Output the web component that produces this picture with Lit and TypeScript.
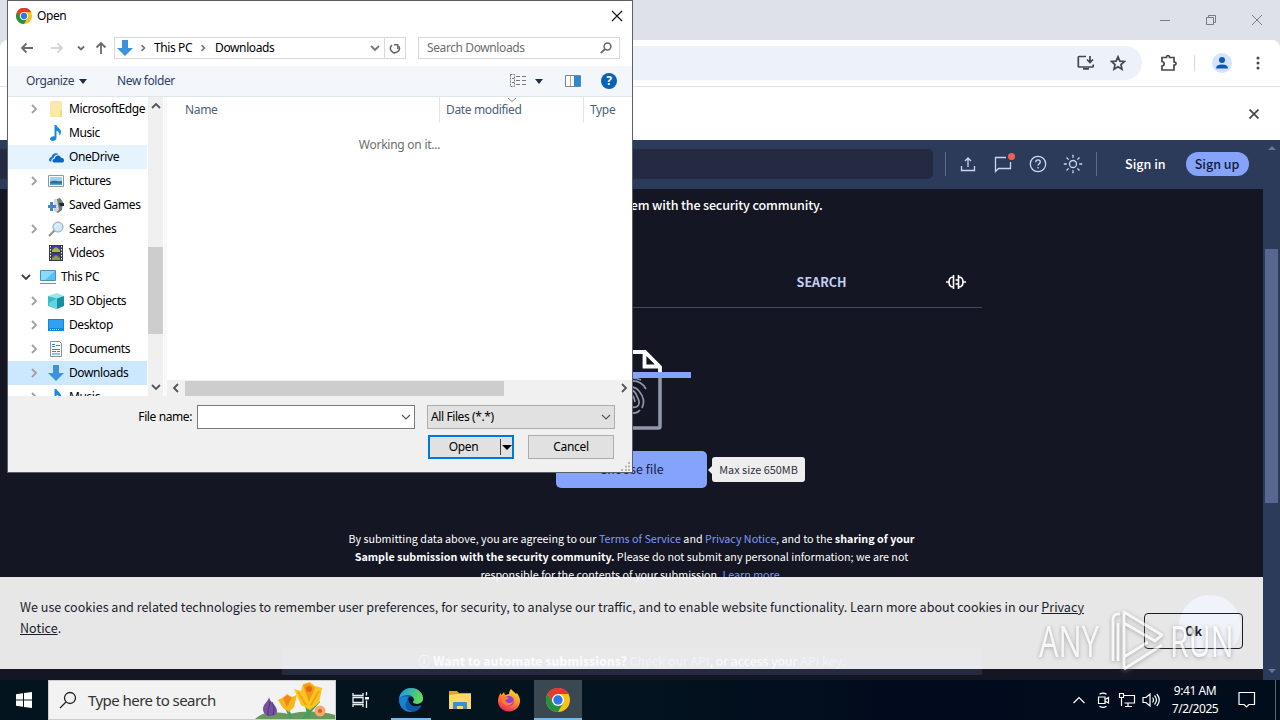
import { LitElement, html, css, svg } from "lit";
import { customElement, property } from "lit/decorators.js";
import { classMap } from "lit/directives/class-map.js";

const chrome = svg`
  <circle cx="12" cy="12" r="12" fill="#fbc116"></circle>
  <path d="M12 12 1.600 6A12 12 0 0 1 22.400 6H12z" fill="#e33b2e"></path>
  <path d="M12 6h10.400A12 12 0 0 0 1.600 6l5.200 9z" fill="#e33b2e"></path>
  <path d="M1.600 6A12 12 0 0 0 12 24l5.200-9H6.800z" fill="#229342"></path>
  <circle cx="12" cy="12" r="6" fill="#fff"></circle>
  <circle cx="12" cy="12" r="4.700" fill="#2b78e8"></circle>`;

const note = svg`<path d="M6.500 0h2c.2 2.500 4.700 3.500 4.500 7-.1 1.600-.8 2.900-1.700 3.800.6-3-.4-4.300-2.800-5.100v7c0 2-1.700 3.300-3.700 3.300-1.700 0-2.800-.9-2.800-2.200 0-1.700 2.100-3 4.500-2.600z" fill="#1a8ad8"></path>`;

const downArrow = svg`<path d="M5 0h6v8h5l-8 8-8-8h5z" fill="#3c93dc"></path>`;

// 16x16 glyphs of the folder tree
const treeIcons: Record<string, unknown> = {
  folder: svg`<path d="M2 0h12v16H2z" fill="#fbe9a9"></path><path d="M12 9h2v7h-2z" fill="#f3d98a"></path>`,
  music: note,
  onedrive: svg`
    <path d="M1 11.500C1 9 2.500 8.300 3.500 8 4 4.500 8 3 10.500 5.200 7.500 5.500 6 7 5.700 9 4 9.300 3 11 3.500 12.500 2 12.500 1 12 1 11.500z" fill="#1377c9"></path>
    <path d="M4.500 12c0-1.500 1-2.300 2.200-2.300C6.800 6.500 11.500 5 13 8.700c2 0 3 1 3 2.700 0 1.400-1 2.100-2 2.100H6.500c-1.200 0-2-.6-2-1.500z" fill="#0c66bb"></path>`,
  pictures: svg`
    <path d="M.5 2.500h15v11H.5z" fill="#fff" stroke="#8d9aa6"></path>
    <path d="M2 4h12v8H2z" fill="#9fd0f2"></path>
    <path d="M2 9c4-3 7 0 12-1v4H2z" fill="#2f6b8e"></path><path d="M2 10.500h12V12H2z" fill="#4fa7d8"></path>`,
  games: svg`
    <path d="M6 3 12 1l3 4-1 8-4 3-4-3z" fill="#707983"></path>
    <path d="M6 3l3-1 2 11-3 2-2-3z" fill="#d2d7db"></path>
    <path d="M11 6h5v3h-4z" fill="#24292e"></path>
    <path d="M2 5h3v3h3v3H5v3H2v-3H0V8h2z" fill="#4485c5"></path>`,
  search: svg`
    <path d="M1 15 7 9" stroke="#8b9197" stroke-width="2"></path>
    <circle cx="10" cy="6" r="5" fill="#cfe8fa" stroke="#8ba8c0"></circle>
    <path d="M7 6c1-3 4-3 5-2" stroke="#fff" fill="none"></path>`,
  videos: svg`
    <path d="M1 0h14v16H1z" fill="#3a3d45"></path>
    <path d="M4 1h8v6H4z" fill="#3b3cae"></path><path d="M4 5l4-3 4 3v2H4z" fill="#a8b73b"></path>
    <path d="M4 9h8v6H4z" fill="#37409c"></path><path d="M4 13l4-3 4 3v2H4z" fill="#8f9a34"></path>
    <path d="M2.500 1v15M13.500 1v15" stroke="#f0f0f0" stroke-dasharray="1.500 1.500"></path>`,
  pc: svg`
    <path d="M.5 1.500h15v10H.5z" fill="#55c0f2" stroke="#4a91b8"></path>
    <path d="M1 2h14L5 11H1z" fill="#8ad8fa"></path><path d="M0 14.500h16" stroke="#8a8f94"></path>`,
  objects: svg`
    <path d="M0 3 9 0l7 3-7 3z" fill="#9be6ee"></path><path d="M0 3l9 2.500V16L0 13z" fill="#36bccb"></path>
    <path d="M9 5.500 16 3v10l-7 3z" fill="#14909e"></path><path d="M1 10l8-5v11l-8-3z" fill="#63d4df"></path>`,
  desktop: svg`
    <path d="M0 2h16v12H0z" fill="#1287d8"></path><path d="M1 3h14v8H1z" fill="#2fa2f2"></path>
    <path d="M2 12.500h9" stroke="#bfe2fa" stroke-dasharray="1 1"></path>`,
  documents: svg`
    <path d="M2.500.5h9l2 2v13h-11z" fill="#fff" stroke="#8c949b"></path>
    <path d="M4 3.500h3M4 5.500h3M8 4.500h4M4 8.500h8M4 10.500h4M9 10.500h3M4 13h8" stroke="#2c8ccd"></path>`,
  downloads: downArrow,
};

interface TreeItem {
  label: string;
  icon: string;
  expand?: "closed" | "open";
  root?: boolean;
  state?: "hover" | "selected";
}

const tree: TreeItem[] = [
  { label: "MicrosoftEdge", icon: "folder", expand: "closed" },
  { label: "Music", icon: "music" },
  { label: "OneDrive", icon: "onedrive", state: "hover" },
  { label: "Pictures", icon: "pictures", expand: "closed" },
  { label: "Saved Games", icon: "games" },
  { label: "Searches", icon: "search", expand: "closed" },
  { label: "Videos", icon: "videos" },
  { label: "This PC", icon: "pc", expand: "open", root: true },
  { label: "3D Objects", icon: "objects", expand: "closed" },
  { label: "Desktop", icon: "desktop", expand: "closed" },
  { label: "Documents", icon: "documents", expand: "closed" },
  { label: "Downloads", icon: "downloads", expand: "closed", state: "selected" },
  { label: "Music", icon: "music", expand: "closed" },
];

@customElement("x-chevron")
export class ChevronElement extends LitElement {
  @property() dir = "down";

  render() {
    const paths: Record<string, string> = {
      down: "M1 3l4 4 4-4",
      up: "M1 7l4-4 4 4",
      left: "M7 1 3 5l4 4",
      right: "M3 1l4 4-4 4",
    };
    return html`<svg viewBox="0 0 10 10" width="10" height="10"><path d=${paths[this.dir]}></path></svg>`;
  }

  static styles = css`
    :host {
      display: inline-flex;
      flex: none;
      color: #555;
    }

    path {
      fill: none;
      stroke: currentColor;
      stroke-width: var(--stroke, 1.800);
    }
  `;
}

@customElement("file-dialog")
export class FileDialog extends LitElement {
  render() {
    return html`
      <div class="title">
        <svg viewBox="0 0 24 24" width="16" height="16">${chrome}</svg>
        <span class="grow">Open</span>
        <svg viewBox="0 0 12 12" width="12" height="12"><path d="M1 1l10 10M11 1 1 11" stroke="#111" stroke-width="1.100"></path></svg>
      </div>
      <div class="address">
        <svg class="nav" viewBox="0 0 14 12" width="14" height="12"><path d="M13 6H2M6.500 1.500 2 6l4.500 4.500"></path></svg>
        <svg class="nav off" viewBox="0 0 14 12" width="14" height="12"><path d="M1 6h11M7.500 1.500 12 6l-4.500 4.500"></path></svg>
        <svg class="nav drop" viewBox="0 0 8 8" width="8" height="8"><path d="M1 2.500l3 3 3-3"></path></svg>
        <svg class="nav" viewBox="0 0 12 14" width="12" height="14"><path d="M6 13V2M1.500 6.500 6 2l4.500 4.500"></path></svg>
        <div class="path">
          <svg viewBox="0 0 16 16" width="16" height="16">${downArrow}</svg>
          <x-chevron class="sep" dir="right"></x-chevron>
          <span>This PC</span>
          <x-chevron class="sep second" dir="right"></x-chevron>
          <span class="grow">Downloads</span>
          <x-chevron class="history"></x-chevron>
          <div class="refresh">
            <svg viewBox="0 0 12 12" width="12" height="12">
              <path d="M3 3A4.400 4.400 0 1 0 9.800 4.200" fill="none" stroke="#666" stroke-width="1.500"></path>
              <path d="M6.200 5.500V1.700H10.500" transform="rotate(90 7 3.500)" fill="none" stroke="#666" stroke-width="1.500"></path>
            </svg>
          </div>
        </div>
        <div class="search">
          <span class="grow">Search Downloads</span>
          <svg viewBox="0 0 12 12" width="12" height="12">
            <circle cx="7.500" cy="4.500" r="3.400" fill="none" stroke="#666" stroke-width="1.500"></circle>
            <path d="M5 7 .8 11.200" stroke="#666" stroke-width="1.800"></path>
          </svg>
        </div>
      </div>
      <div class="toolbar">
        <span>Organize</span>
        <i class="caret"></i>
        <span class="folder">New folder</span>
        <span class="grow"></span>
        <svg viewBox="0 0 16 14" width="16" height="14">
          <path d="M.5.5h4v12h-4z" fill="none" stroke="#777" stroke-dasharray="2 1"></path>
          <path d="M6 2.500h4M12 2.500h4M6 6.500h4M12 6.500h4M6 10.500h4M12 10.500h4M2 4.500h2M2 8.500h2" stroke="#777"></path>
        </svg>
        <i class="caret views"></i>
        <svg class="pane" viewBox="0 0 16 12" width="16" height="12">
          <path d="M.5.500h15v11H.5z" fill="#fff" stroke="#6c8aa3"></path>
          <path d="M5.500 1v10" stroke="#c2a184"></path>
          <path d="M9 1h6.500v10.500H9z" fill="#2f88cf"></path>
        </svg>
        <span class="help">?</span>
      </div>
      <div class="body">
        <div class="tree">${tree.map((item) => this.treeRow(item))}</div>
        <div class="vscroll">
          <x-chevron dir="up"></x-chevron>
          <div class="vthumb"></div>
          <x-chevron></x-chevron>
        </div>
        <div class="files">
          <div class="columns">
            <span class="name">Name</span>
            <span class="date">Date modified
              <svg class="sort" viewBox="0 0 8 4" width="8" height="4"><path d="M0 0l4 3.500L8 0" fill="none" stroke="#888"></path></svg>
            </span>
            <span class="type">Type</span>
          </div>
          <div class="working">Working on it...</div>
          <div class="hscroll">
            <x-chevron dir="left"></x-chevron>
            <div class="hthumb"></div>
            <x-chevron dir="right"></x-chevron>
          </div>
        </div>
      </div>
      <div class="footer">
        <div class="row">
          <span class="label">File name:</span>
          <div class="field"><x-chevron></x-chevron></div>
          <div class="filter"><span class="grow">All Files (*.*)</span><x-chevron></x-chevron></div>
        </div>
        <div class="row buttons">
          <div class="btn primary"><span>Open</span><i class="caret"></i></div>
          <div class="btn">Cancel</div>
        </div>
        <svg class="grip" viewBox="0 0 9 9" width="9" height="9">
          <path d="M7 0h2v2H7zM4 3.500h2v2H4zM7 3.500h2v2H7zM0 7h2v2H0zM4 7h2v2H4zM7 7h2v2H7z" fill="#b9b5aa"></path>
        </svg>
      </div>
    `;
  }

  private treeRow(item: TreeItem) {
    const classes = {
      item: true,
      root: !!item.root,
      hover: item.state === "hover",
      selected: item.state === "selected",
    };
    return html`
      <div class=${classMap(classes)}>
        <span class="toggle">
          ${item.expand ? html`<x-chevron class=${item.expand} dir=${item.expand === "open" ? "down" : "right"}></x-chevron>` : ""}
        </span>
        <svg viewBox="0 0 16 16" width="16" height="16">${treeIcons[item.icon]}</svg>
        <span>${item.label}</span>
      </div>
    `;
  }

  static styles = css`
    :host {
      display: flex;
      flex-direction: column;
      box-sizing: border-box;
      border: 1px solid #5d5f66;
      background: #fff;
      color: #000;
      font: 12px/16px "Noto Sans", "Open Sans", sans-serif;
      letter-spacing: -0.400px;
      white-space: nowrap;
    }

    .grow {
      flex: 1;
    }

    .title {
      display: flex;
      align-items: center;
      height: 29px;
      padding: 0 9px 0 8px;
      gap: 5px;
    }

    .address {
      display: flex;
      align-items: center;
      height: 36px;
      padding-left: 12px;
    }

    .nav {
      margin-right: 16px;
    }

    .nav path {
      fill: none;
      stroke: #6b6b6b;
      stroke-width: 1.800;
    }

    .nav.off path {
      stroke: #d5d5d5;
    }

    .nav.drop {
      margin: 0 10px 0 -3px;
    }

    .nav.drop + .nav {
      margin-right: 7px;
    }

    .path,
    .search {
      display: flex;
      align-items: center;
      box-sizing: border-box;
      height: 22px;
      border: 1px solid #d9d9d9;
    }

    .path {
      width: 292px;
      padding-left: 2px;
    }

    .sep {
      margin: 0 6px 0 5px;
      transform: scale(0.7);
      color: #777;
      --stroke: 2.400;
    }

    .sep.second {
      margin: 0 7px 0 6px;
    }

    .history {
      color: #777;
    }

    .refresh {
      display: flex;
      align-items: center;
      justify-content: center;
      width: 20px;
      height: 20px;
      margin-left: 4px;
      border-left: 1px solid #d9d9d9;
    }

    .search {
      width: 202px;
      margin-left: 12px;
      padding: 0 7px 0 8px;
      color: #6d6d6d;
    }

    .toolbar {
      display: flex;
      align-items: center;
      box-sizing: border-box;
      height: 31px;
      padding: 0 15px 0 18px;
      border-bottom: 1px solid #e1e6ea;
      background: #f3f6fa;
      color: #2c3f66;
    }

    .caret {
      margin-left: 5px;
      border: 4px solid transparent;
      border-top: 5px solid #1e2f46;
      border-bottom: 0;
    }

    .folder {
      margin-left: 30px;
    }

    .views {
      margin: 0 22px 0 9px;
    }

    .help {
      width: 16px;
      height: 16px;
      margin-left: 20px;
      border-radius: 50%;
      background: #0663b8;
      color: #fff;
      font-weight: 700;
      text-align: center;
    }

    .body {
      display: flex;
      height: 299px;
    }

    .tree {
      width: 139px;
      overflow: hidden;
    }

    .item {
      display: flex;
      align-items: center;
      height: 24px;
    }

    .item svg {
      flex: none;
      margin-right: 5px;
    }

    .toggle {
      display: flex;
      justify-content: center;
      flex: none;
      width: 12px;
      padding: 0 8px 0 20px;
    }

    .root .toggle {
      padding: 0 8px 0 12px;
    }

    .closed {
      color: #a0a0a0;
    }

    .open {
      color: #404040;
    }

    .hover {
      background: #e5f3ff;
    }

    .selected {
      background: #cce8ff;
    }

    .vscroll {
      display: flex;
      flex-direction: column;
      align-items: center;
      box-sizing: border-box;
      width: 15px;
      margin-left: 1px;
      padding: 4px 0;
      background: #f0f0f0;
    }

    .vthumb {
      width: 15px;
      height: 88px;
      margin: 136px 0 48px;
      background: #cdcdcd;
    }

    .files {
      display: flex;
      flex: 1;
      flex-direction: column;
      margin-left: 1px;
      border-left: 3px solid #f8f8f8;
    }

    .columns {
      display: flex;
      height: 26px;
      line-height: 26px;
      color: #4c607a;
      letter-spacing: -0.350px;
    }

    .name {
      width: 254px;
      padding-left: 18px;
    }

    .date {
      position: relative;
      width: 137px;
      padding-left: 6px;
      border-left: 1px solid #e5e5e5;
    }

    .sort {
      position: absolute;
      top: 1px;
      left: 68px;
    }

    .type {
      padding-left: 6px;
      border-left: 1px solid #e5e5e5;
    }

    .working {
      flex: 1;
      padding-top: 14px;
      color: #6d6d6d;
      letter-spacing: -0.250px;
      text-align: center;
    }

    .hscroll {
      display: flex;
      align-items: center;
      height: 16px;
      padding: 0 3px 0 4px;
      background: #f0f0f0;
    }

    .hthumb {
      width: 319px;
      height: 15px;
      margin: 0 auto 0 4px;
      background: #cdcdcd;
    }

    .footer {
      position: relative;
      flex: 1;
      padding: 9px 17px 0 0;
      background: #f0f0f0;
    }

    .row {
      display: flex;
      align-items: center;
      justify-content: flex-end;
    }

    .label {
      margin-right: 5px;
    }

    .field,
    .filter {
      display: flex;
      align-items: center;
      justify-content: flex-end;
      box-sizing: border-box;
      height: 24px;
      padding: 0 3px;
      --stroke: 1.100;
    }

    .field {
      width: 218px;
      border: 1px solid #7a7a7a;
      background: #fff;
    }

    .filter {
      width: 188px;
      margin-left: 12px;
      border: 1px solid #adadad;
      background: #e1e1e1;
    }

    .buttons {
      gap: 14px;
      margin: 6px 1px 0 0;
      letter-spacing: -0.300px;
    }

    .btn {
      display: flex;
      align-items: center;
      justify-content: center;
      box-sizing: border-box;
      width: 86px;
      height: 24px;
      border: 1px solid #adadad;
      background: #e1e1e1;
    }

    .primary {
      justify-content: flex-end;
      border: 2px solid #0078d7;
    }

    .primary span {
      box-sizing: border-box;
      width: 71px;
      margin-right: 1px;
      padding-right: 3px;
      border-right: 1px solid #444;
      text-align: center;
    }

    .primary .caret {
      margin: 0;
      border-width: 5px 5px 0;
      border-top-color: #000;
    }

    .grip {
      position: absolute;
      right: 2px;
      bottom: 1px;
    }
  `;
}

@customElement("web-page")
export class WebPage extends LitElement {
  render() {
    return html`
      <header>
        <div class="query"></div>
        <i class="rule"></i>
        <svg viewBox="0 0 16 16" width="16" height="16"><path d="M8 11V2M5 5l3-3 3 3M1.500 10v4.500h13V10"></path></svg>
        <span class="chat">
          <svg viewBox="0 0 18 18" width="18" height="18"><path d="M12 2.500H1.500v14l3-3h12V7"></path></svg>
          <i class="dot"></i>
        </span>
        <svg viewBox="0 0 18 18" width="18" height="18">
          <circle cx="9" cy="9" r="7.700"></circle>
          <path d="M6.700 7.200c0-3.200 4.600-3 4.600-.2 0 1.700-2.300 1.700-2.300 3.500M9 12v1.400"></path>
        </svg>
        <svg viewBox="0 0 20 20" width="20" height="20">
          <circle cx="10" cy="10" r="3.500"></circle>
          <path d="M10 .8v3M10 16.200v3M.8 10h3M16.200 10h3M3.500 3.500l2.100 2.100M14.400 14.400l2.100 2.100M3.500 16.500l2.100-2.100M14.400 5.600l2.100-2.100"></path>
        </svg>
        <i class="rule second"></i>
        <span class="signin">Sign in</span>
        <span class="signup">Sign up</span>
      </header>
      <main>
        <p class="intro">Analyse suspicious files, domains, IPs and URLs to detect malware and other<br>breaches, automatically share them with the security community.</p>
        <div class="tabs">
          <span class="tab">FILE</span>
          <span class="tab">URL</span>
          <span class="tab">SEARCH</span>
          <span class="code">
            <svg viewBox="0 0 20 16" width="20" height="16">
              <path d="M7.500 1v14M12.500 1v14M7.500 3C4 3 3 5 3 8s1 5 4.500 5M12.500 3C16 3 17 5 17 8s-1 5-4.500 5M0 8h3M17 8h3M9.500 6h3M9.500 10h3"></path>
            </svg>
          </span>
        </div>
        <div class="drop">
          <svg viewBox="0 0 118 80" width="118" height="80">
            <path d="M31 26v50.500q0 1.500 1.500 1.500h53q1.500 0 1.500-1.500V26" fill="none" stroke="#9196ab" stroke-width="3.600"></path>
            <path d="M31 26V2h41l15 15v8M71.500 2v14.500H87" fill="none" stroke="#fff" stroke-width="3.800"></path>
            <g fill="none" stroke="#9196ab" stroke-width="1.700">
              <path d="M50 30q9-4 18 0M45 40c7-12 22-12 28-1M46 50c-2-14 14-17 20-9 5 6 6 11 3 17M56 62c4 2 9 1 11-2M50 55c0-4-2-12 5-15 7-2 9 6 11 11 1 6-6 9-9 3-1-3-1-6-3-5-2 1 0 6 0 9M57 46c2-2 4 0 5 6"></path>
            </g>
            <path d="M0 22h118v6H0z" fill="#85a3fb"></path>
          </svg>
          <div class="choose">Choose file<span class="tip">Max size 650MB</span></div>
        </div>
        <p class="terms">
          By submitting data above, you are agreeing to our <a>Terms of Service</a> and <a>Privacy Notice</a>, and to the <b>sharing of your<br>Sample submission with the security community.</b> Please do not submit any personal information; we are not<br>responsible for the contents of your submission. <a>Learn more.</a>
        </p>
        <div class="api"><span>ⓘ <b>Want to automate submissions?</b> <a>Check our API</a>, or access your <a>API key.</a></span></div>
      </main>
      <div class="bubble"></div>
      <div class="cookies">
        <span>We use cookies and related technologies to remember user preferences, for security, to analyse our traffic, and to enable website functionality. Learn more about cookies in our <u>Privacy<br>Notice</u>.</span>
        <div class="ok">Ok</div>
      </div>
    `;
  }

  static styles = css`
    :host {
      display: block;
      position: relative;
      z-index: 0;
      overflow: hidden;
      background: #151623;
      color: #fff;
      font-family: "Noto Sans CJK SC", sans-serif;
      font-size: 12.550px;
      white-space: nowrap;
    }

    header {
      display: flex;
      position: relative;
      z-index: 1;
      align-items: center;
      box-sizing: border-box;
      height: 49px;
      padding-bottom: 1px;
      background: #2d3b5b;
    }

    header svg {
      fill: none;
      stroke: #cbd5f0;
      stroke-width: 1.300;
    }

    .query {
      width: 933px;
      height: 30px;
      margin-right: 12px;
      border-radius: 0 5px 5px 0;
      background: #242a42;
    }

    .rule {
      width: 1px;
      height: 24px;
      margin-right: 14px;
      background: #5d6b8c;
    }

    .chat {
      position: relative;
      height: 18px;
      margin: 0 17px 0 18px;
    }

    .chat + svg {
      margin-right: 16px;
    }

    .dot {
      position: absolute;
      top: -2px;
      right: -3px;
      width: 7px;
      height: 7px;
      border-radius: 50%;
      background: #f0604f;
    }

    .second {
      margin: 0 28px 0 13px;
    }

    .signin,
    .signup {
      height: 24px;
      font-weight: 500;
      line-height: 23px;
    }

    .signup {
      width: 63px;
      margin-left: 20px;
      border-radius: 12px;
      background: #85a3fb;
      color: #141a35;
      text-align: center;
    }

    main {
      display: flex;
      flex-direction: column;
      align-items: center;
      margin-top: -16px;
    }

    p {
      margin: 0;
      text-align: center;
    }

    .intro {
      font-weight: 500;
      letter-spacing: -0.150px;
      line-height: 21px;
    }

    .tabs {
      display: flex;
      align-items: center;
      box-sizing: border-box;
      width: 700px;
      height: 52px;
      margin-top: 41px;
      border-bottom: 1px solid #47495a;
      color: #c3cff5;
      font-weight: 700;
    }

    .tab {
      width: 216px;
      text-align: center;
    }

    .code {
      display: flex;
      flex: 1;
      justify-content: center;
    }

    .code path {
      fill: none;
      stroke: #fff;
      stroke-width: 1.600;
    }

    .drop {
      display: flex;
      flex-direction: column;
      align-items: center;
      margin-top: 42px;
    }

    .choose {
      position: relative;
      width: 151px;
      height: 37px;
      margin-top: 21px;
      border-radius: 5px;
      background: #85a3fb;
      color: #182046;
      line-height: 36px;
      text-align: center;
    }

    .tip {
      position: absolute;
      top: 6px;
      left: 156px;
      width: 93px;
      height: 25px;
      border-radius: 3px;
      background: #eeeeef;
      color: #30313b;
      font-size: 10.900px;
      line-height: 25px;
    }

    .tip::before {
      content: "";
      position: absolute;
      top: 9px;
      left: -4px;
      border: 4px solid transparent;
      border-right-color: #eeeeef;
      border-left: 0;
    }

    .terms {
      margin-top: 42px;
      font-size: 10.740px;
      line-height: 18px;
    }

    a {
      color: #7d9bf5;
    }

    .api {
      width: 700px;
      height: 27px;
      margin-top: 64px;
      background: #262a41;
      font-size: 12.400px;
      line-height: 26px;
      text-align: center;
    }

    .bubble {
      position: absolute;
      top: 455px;
      left: 1179px;
      width: 62px;
      height: 62px;
      border-radius: 50%;
      background: #85a3fb;
    }

    .cookies {
      display: flex;
      position: absolute;
      bottom: 11px;
      left: 0;
      box-sizing: border-box;
      width: 100%;
      height: 92px;
      padding: 19px 20px;
      justify-content: space-between;
      background: #fafafaeb;
      color: #1b1d2b;
      line-height: 21px;
    }

    .ok {
      box-sizing: border-box;
      width: 99px;
      height: 36px;
      margin-top: 17px;
      border: 1px solid #1b1d2b;
      border-radius: 4px;
      font-weight: 700;
      line-height: 34px;
      text-align: center;
    }
  `;
}

@customElement("task-bar")
export class TaskBar extends LitElement {
  render() {
    return html`
      <div class="start">
        <svg viewBox="0 0 16 16" width="16" height="16" fill="#fff"><path d="M0 2.300 7 1.300v6.200H0zM8 1.100 16 0v7.500H8zM0 8.500h7v6.200l-7-1zM8 8.500h8V16l-8-1.100z"></path></svg>
      </div>
      <div class="search">
        <svg viewBox="0 0 18 18" width="18" height="18" fill="none" stroke="#222" stroke-width="1.300"><circle cx="11" cy="7" r="5.500"></circle><path d="M7 11 1 17"></path></svg>
        <span>Type here to search</span>
        <svg class="flowers" viewBox="0 0 80 38" width="80" height="38">
          <path d="M0 38c8-8 20-8 34-5 16-4 34-3 46 1v4z" fill="#659a5c"></path>
          <path d="M36 36l-5-10M54 36l-3-14M48 38l16-18" stroke="#42a15b" stroke-width="3" fill="none"></path>
          <path d="M14 16c1 6 8 8 8 14 0 4-3 5-7 5s-7-3-7-7c0-5 5-7 6-12z" fill="#74509c"></path>
          <path d="M15 20c0 6-3 8-2 15M17 21c3 5 2 9 1 13" stroke="#513478" fill="none"></path>
          <path d="M23 19l6-3 3-3 5 3 5-2-3 12-5 5-6-4z" fill="#f8b719"></path>
          <path d="M28 17l4 9 5-9-5-3z" fill="#f08a17"></path>
          <path d="M39 8l7 2 2-7 7-2 5 4 7 2-3 15-9 7-9-5z" fill="#fbc41e"></path>
          <path d="M48 4l6 17 6-14-6-5z" fill="#f09a17"></path>
          <path d="M43 11l8 13M64 10l-8 14" stroke="#f0a419" stroke-width="2"></path>
          <circle cx="54" cy="8" r="3" fill="#e06a1a"></circle>
          <circle cx="65" cy="30" r="5.500" fill="#f5a86c"></circle><circle cx="65" cy="30" r="2" fill="#d25d26"></circle>
        </svg>
      </div>
      <div class="app">
        <svg viewBox="0 0 18 16" width="18" height="16" fill="none" stroke="#e8eef2" stroke-width="1.300"><path d="M1 1v2.500h10V1M1 15v-2.500h10V15M1 5.500h10v5H1zM14.500 0v3.500M14.500 8.500V16"></path><path d="M13 5h4v2.500h-4z" fill="#fff" stroke="none"></path></svg>
      </div>
      <div class="app edge running">
        <svg viewBox="0 0 24 24" width="24" height="24">
          <defs>
            <linearGradient id="edge" x1="0" y1="0" x2="1" y2=".3"><stop offset=".1" stop-color="#1a9ae0"></stop><stop offset="1" stop-color="#62d957"></stop></linearGradient>
          </defs>
          <circle cx="12" cy="12" r="12" fill="#0f60b4"></circle>
          <path d="M0 11C1 4 6 0 12 0c7 0 12 5 12 10 0 4-3 6-6 6-2.500 0-4-.8-4-2 0-.8.800-1.200.8-2.500C14.800 9 12 7 9 7 5 7 1 9 0 11z" fill="url(#edge)"></path>
          <path d="M9.500 9C7 11 6 20 13 23.500 4 25 0 17 0 11c2-3 6-3 9.500-2z" fill="#1682d0"></path>
          <path d="M9.500 9.500c-1 7 5 11 13 7.500l-1 3c1-.5 2-1 2.500-2V13c-1.500 2-4 3-6 3-2.500 0-4-.8-4-2 0-1 .8-1.500.8-2.500 0-3-4-4-5.300-2z" fill="#00131f"></path>
          <path d="M9.500 12c0 6 7 8.500 12 5.500C18 24 10 25 7 20c-1.500-3 0-6 2.500-8z" fill="#1058a8"></path>
        </svg>
      </div>
      <div class="app files">
        <svg viewBox="0 0 22 18" width="22" height="18">
          <path d="M0 0h8l2 2h12v3H0z" fill="#e8a317"></path><path d="M0 4l9-1h13v15H0z" fill="#fbd968"></path>
          <path d="M4 18v-6q0-1 1-1h12q1 0 1 1v6h-4v-3H8v3z" fill="#3a8fd4"></path>
        </svg>
      </div>
      <div class="app">
        <svg viewBox="0 0 24 24" width="24" height="24">
          <defs>
            <linearGradient id="fox" x1=".8" y1="0" x2=".3" y2="1"><stop offset="0" stop-color="#ffe226"></stop><stop offset=".45" stop-color="#ff9128"></stop><stop offset="1" stop-color="#f4225d"></stop></linearGradient>
          </defs>
          <path d="M14 1c1 2 4 3 5 5l1-1c2 3 3.500 6 3 9-1 6-6 9.500-11 9.500C5 23.500.6 18 1 12c.2-3 1.500-5 2.500-7l1 2L7 4l1 3 4-1c0-2 1-4 2-5z" fill="url(#fox)"></path>
          <circle cx="12" cy="13" r="5" fill="#8a3edc"></circle>
          <path d="M5 9c3-1 5 0 7 1-2 1-2 2-4 2 1 4 7 4 9 0-1 6-10 8-12 1z" fill="#ff7d2b"></path>
        </svg>
      </div>
      <div class="app running active"><svg viewBox="0 0 24 24" width="24" height="24">${chrome}</svg></div>
      <div class="tray">
        <svg class="more" viewBox="0 0 12 8" width="12" height="8"><path d="M.5 7 6 1.500 11.500 7"></path></svg>
        <svg class="meet" viewBox="0 0 14 16" width="14" height="16"><path d="M2.500 5h6.500v6.500H2.500zM9 7.500 12.500 5.500v5.500L9 9M3.500 2.300q3.500-2.500 7 0M3.500 14.200q3.500 2.500 7 0"></path></svg>
        <svg viewBox="0 0 18 16" width="18" height="16"><path d="M5 3.500h11.500v7.500h-10M10 11v3M7 14.500h7M1.500 1.500h4v4h-4zM3.500 5.500V14"></path></svg>
        <svg viewBox="0 0 18 16" width="18" height="16"><path d="M1 5.500h3L8 2v12l-4-3.500H1zM10.500 5.500q2 2.500 0 5M12.500 3.500q4 4.500 0 9M14.800 2q5 6 0 12"></path></svg>
        <div class="clock"><span>9:41 AM</span><span>7/2/2025</span></div>
        <svg viewBox="0 0 18 18" width="18" height="18"><path d="M1 1.500h15.500v12H11L8.500 16 6 13.500H1z"></path></svg>
      </div>
    `;
  }

  static styles = css`
    :host {
      display: flex;
      height: 40px;
      background: linear-gradient(90deg, #04141e, #03131f 50%, #020b1d 70%, #020d1c);
      font-family: "Noto Sans", "Open Sans", sans-serif;
    }

    .start,
    .app {
      display: flex;
      align-items: center;
      justify-content: center;
      box-sizing: border-box;
      width: 49px;
    }

    .start {
      width: 48px;
    }

    .search {
      display: flex;
      align-items: center;
      box-sizing: border-box;
      width: 288px;
      padding-left: 10px;
      gap: 11px;
      border: 1px solid #c9cbcc;
      background: #f2f2f2;
      color: #333;
      font-size: 15px;
      letter-spacing: -0.550px;
    }

    .flowers {
      margin-left: auto;
    }

    .app svg {
      flex: none;
    }

    .running {
      border-bottom: 2px solid #76b9ed;
      padding-top: 2px;
    }

    .edge {
      width: 40px;
      margin: 0 5px 0 6px;
    }

    .files {
      width: 48px;
    }

    .active {
      width: 48px;
      margin-left: 1px;
      background: #3a4851;
    }

    .tray {
      display: flex;
      align-items: center;
      margin-left: auto;
      margin-right: 4px;
      padding-right: 19px;
      gap: 6px;
      border-right: 1px solid #5a6570;
      color: #fff;
    }

    .tray svg {
      fill: none;
      stroke: #fff;
      stroke-width: 1.200;
    }

    .more {
      margin-right: 5px;
    }

    .meet {
      margin-right: 2px;
    }

    .clock {
      display: flex;
      flex-direction: column;
      align-items: center;
      width: 52px;
      margin: 0 11px 0 3px;
      font-size: 12px;
      letter-spacing: -0.450px;
      line-height: 18px;
      white-space: nowrap;
    }
  `;
}

@customElement("app-root")
export class AppRoot extends LitElement {
  render() {
    return html`
      <div class="strip">
        <svg viewBox="0 0 10 10" width="10" height="10"><path d="M0 5.500h10"></path></svg>
        <svg viewBox="0 0 10 10" width="10" height="10"><path d="M.5 2.500h7v7h-7zM2.500 2.500v-2h7v7h-2"></path></svg>
        <svg viewBox="0 0 10 10" width="10" height="10"><path d="M0 0l10 10M10 0 0 10"></path></svg>
      </div>
      <div class="toolbar">
        <div class="omnibox">
          <svg viewBox="0 0 18 16" width="18" height="16"><path d="M9 1.500H2q-.7 0-.7.700v9q0 .8.700.8h13.500q.7 0 .7-.8V9.500M13 1v6M10 4.500l3 3 3-3M6 13.800h6"></path></svg>
          <svg viewBox="0 0 16 16" width="16" height="16"><path d="M8 1.800l1.900 4.300 4.600.4L11 9.600l1 4.600-4-2.500-4 2.500 1-4.600-3.500-3.100 4.600-.4z"></path></svg>
        </div>
        <svg viewBox="0 0 18 18" width="18" height="18"><path d="M2 3.500h4.500q0-2 1.500-2t1.500 2H14v4.500q2 0 2 1.500T14 11v5H2v-4q2.200-.3 2.200-2.200T2 7.500z"></path></svg>
        <i class="split"></i>
        <svg class="user" viewBox="0 0 20 20" width="20" height="20"><circle cx="10" cy="10" r="10" fill="#d5e3fc"></circle><circle cx="10" cy="7" r="3" fill="#0b57c0"></circle><path d="M4 15.500q0-4 6-4t6 4z" fill="#0b57c0"></path></svg>
        <svg class="dots" viewBox="0 0 4 14" width="4" height="14"><circle cx="2" cy="2" r="1.500"></circle><circle cx="2" cy="7" r="1.500"></circle><circle cx="2" cy="12" r="1.500"></circle></svg>
      </div>
      <div class="infobar">
        <svg viewBox="0 0 10 10" width="10" height="10"><path d="M.5.500l9 9M9.500.5l-9 9"></path></svg>
      </div>
      <div class="view">
        <web-page></web-page>
        <div class="scroll">
          <i class="arrow up"></i>
          <i class="thumb"></i>
          <i class="arrow down"></i>
        </div>
      </div>
      <task-bar></task-bar>
      <file-dialog></file-dialog>
      <div class="watermark">
        <span>ANY</span>
        <svg viewBox="0 0 56 62" width="56" height="62" fill="none" stroke="#fff" stroke-width="2.800" stroke-linejoin="round">
          <path d="M3 52V10q1-6 7-5M14 48V3l38 23-7 6-31-18M8 52V14M14 60l38-24M14 60V48l24-15"></path>
        </svg>
        <span>RUN</span>
      </div>
    `;
  }

  static styles = css`
    :host {
      display: flex;
      flex-direction: column;
      position: relative;
      width: 1280px;
      height: 720px;
      overflow: hidden;
      background: #dee1e9;
    }

    .strip {
      display: flex;
      align-items: center;
      justify-content: flex-end;
      height: 40px;
      padding-right: 18px;
      gap: 36px;
    }

    .strip path {
      fill: none;
      stroke: #777b82;
    }

    .toolbar {
      display: flex;
      align-items: center;
      box-sizing: border-box;
      height: 47px;
      padding: 0 20px 0 100px;
      border-bottom: 1px solid #dcdfe3;
      border-radius: 8px 8px 0 0;
      background: #fff;
    }

    .toolbar svg,
    .infobar svg {
      fill: none;
      stroke: #44474c;
      stroke-width: 1.700;
    }

    .toolbar .user,
    .toolbar .dots {
      fill: #44474c;
      stroke: none;
    }

    .omnibox {
      display: flex;
      align-items: center;
      justify-content: flex-end;
      box-sizing: border-box;
      width: 1042px;
      height: 34px;
      margin-right: 18px;
      padding-right: 16px;
      gap: 15px;
      border-radius: 17px;
      background: #edf1fa;
    }

    .split {
      width: 1px;
      height: 16px;
      margin: 0 17px 0 16px;
      background: #d3d9e4;
    }

    .dots {
      margin-left: 24px;
    }

    .infobar {
      display: flex;
      align-items: center;
      justify-content: flex-end;
      height: 53px;
      padding-right: 21px;
      background: #fff;
    }

    .view {
      display: flex;
      height: 540px;
    }

    web-page {
      width: 1263px;
    }

    .scroll {
      display: flex;
      flex-direction: column;
      align-items: center;
      width: 17px;
      background: #2d3b5b;
    }

    .arrow {
      margin-top: 6px;
      border: 4px solid transparent;
      border-top: 0;
      border-bottom: 4px solid #65779e;
    }

    .thumb {
      width: 13px;
      height: 254px;
      margin: 99px 0 160px;
      background: #56688f;
    }

    .arrow.down {
      border-top: 4px solid #65779e;
      border-bottom: 0;
    }

    file-dialog {
      position: absolute;
      z-index: 1;
      top: 0;
      left: 7px;
      width: 626px;
      height: 473px;
    }

    .watermark {
      display: flex;
      position: absolute;
      z-index: 2;
      top: 609px;
      left: 1039px;
      align-items: center;
      gap: 8px;
      color: #fff;
      font: 44px/62px "Open Sans", sans-serif;
      opacity: 0.7;
      filter: drop-shadow(0 1px 2px #888);
    }

    .watermark span {
      width: 61px;
      transform: scaleX(0.7);
      transform-origin: 0 50%;
    }

    .watermark svg {
      margin-left: 2px;
    }

    .watermark svg + span {
      margin-left: -4px;
      transform: scaleX(0.69);
    }
  `;
}
